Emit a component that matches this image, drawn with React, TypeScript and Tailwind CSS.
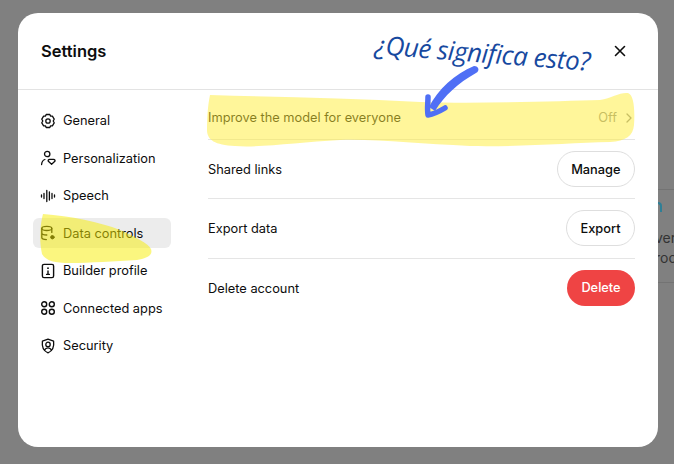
const iconClass = 'w-[16px] h-[16px] shrink-0';

const GeneralIcon = () => (
  <svg viewBox="0 0 16 16" fill="none" stroke="currentColor" strokeWidth="1.3" strokeLinejoin="round" className={iconClass}>
    <path d="M6.2 1.5h3.6l.8 1.6 1.8.1 1.8 3-1 1.8 1 1.8-1.8 3-1.8.1-.8 1.6H6.2l-.8-1.6-1.8-.1-1.8-3 1-1.8-1-1.8 1.8-3 1.8-.1z" />
    <circle cx="8" cy="8" r="2.2" />
  </svg>
);

const PersonalizationIcon = () => (
  <svg viewBox="0 0 16 16" fill="none" stroke="currentColor" strokeWidth="1.3" strokeLinecap="round" strokeLinejoin="round" className={iconClass}>
    <circle cx="7.2" cy="4" r="2.7" />
    <path d="M1.6 14.5c.2-2.4 1.3-4.3 3.3-5" />
    <path d="M11.6 14.2 8.6 11.6c-.9-.9-.2-2.3 1-2.3h4c1.2 0 1.9 1.4 1 2.3z" />
  </svg>
);

const SpeechIcon = () => (
  <svg viewBox="0 0 16 16" fill="none" stroke="currentColor" strokeWidth="1.3" strokeLinecap="round" className={iconClass}>
    <path d="M1.500 7v2M4 5.500v5M6.800 2.500v11M9.400 4v8M12 5.500v5M14.500 7v2" />
  </svg>
);

const DataIcon = () => (
  <svg viewBox="0 0 16 16" fill="none" stroke="currentColor" strokeWidth="1.3" strokeLinecap="round" className={iconClass}>
    <ellipse cx="6.8" cy="3.4" rx="5" ry="2.1" />
    <path d="M1.8 3.4v9.2c0 1.2 2 2 4.6 2M11.8 3.4v4M1.8 8c0 1.2 2.2 2 5 2" />
    <circle cx="12.4" cy="12.2" r="1.7" fill="currentColor" strokeWidth="1" />
  </svg>
);

const BuilderIcon = () => (
  <svg viewBox="0 0 16 16" fill="none" stroke="currentColor" strokeWidth="1.4" strokeLinecap="round" className={iconClass}>
    <rect x="2.4" y="1.4" width="11.2" height="13.2" rx="1.6" />
    <circle cx="8" cy="5.2" r="0.9" fill="currentColor" stroke="none" />
    <path d="M8 8v3.4M6.6 11.4h2.8" />
  </svg>
);

const AppsIcon = () => (
  <svg viewBox="0 0 16 16" fill="none" stroke="currentColor" strokeWidth="1.4" className={iconClass}>
    <circle cx="4.2" cy="4.2" r="2.5" />
    <circle cx="11.8" cy="4.2" r="2.5" />
    <circle cx="4.2" cy="11.8" r="2.5" />
    <circle cx="11.8" cy="11.8" r="2.5" />
  </svg>
);

const SecurityIcon = () => (
  <svg viewBox="0 0 16 16" fill="none" stroke="currentColor" strokeWidth="1.3" strokeLinecap="round" strokeLinejoin="round" className={iconClass}>
    <path d="M8 1.2 13.600 3.200c.6 4.800.2 9.400-5.600 11.600C2.200 12.600 1.800 8 2.400 3.200z" />
    <circle cx="8" cy="6.400" r="2.200" />
    <path d="M4.600 12c.7-1.500 1.900-2.200 3.400-2.200s2.700.7 3.400 2.200" />
  </svg>
);

const navItems = [
  { label: 'General', icon: <GeneralIcon /> },
  { label: 'Personalization', icon: <PersonalizationIcon /> },
  { label: 'Speech', icon: <SpeechIcon /> },
  { label: 'Data controls', icon: <DataIcon />, active: true },
  { label: 'Builder profile', icon: <BuilderIcon /> },
  { label: 'Connected apps', icon: <AppsIcon /> },
  { label: 'Security', icon: <SecurityIcon /> },
];

const rows = [
  { label: 'Shared links', action: 'Manage' },
  { label: 'Export data', action: 'Export' },
  { label: 'Delete account', action: 'Delete', danger: true },
];

const Annotations = () => (
  <>
    <svg viewBox="0 0 674 464" className="absolute inset-0 w-[674px] h-[464px] pointer-events-none">
      <path
        fill="#ffed35"
        fillOpacity="0.5"
        d="M210 95C280 97 350 98 420 102C480 104 560 101 600 100C612 98 620 92 628 93C634 95 635 110 634 125C633 136 626 141 610 142C570 143 520 147 470 146C420 144 380 139 340 140C300 142 260 148 235 146C215 145 207 140 207 130C207 115 208 105 210 95Z"
      />
      <path
        fill="#f7ed00"
        fillOpacity="0.5"
        d="M43 214C70 216 100 222 120 230C135 237 148 243 151 249C153 255 148 258 137 260C115 261 90 263 70 263C55 263 46 261 42 254C39 240 40 225 43 214Z"
      />
    </svg>
    <svg viewBox="0 0 674 464" fill="none" className="absolute inset-0 w-[674px] h-[464px] pointer-events-none">
      <path fill="#4f6ff5" d="M474 66C479 66 480 71 476 73C458 83 444 96 435 111L429 107C438 89 455 74 474 66Z" />
      <path stroke="#4f6ff5" strokeWidth="5.500" strokeLinecap="round" strokeLinejoin="round" d="M428 97C428 103 427 109 428 115C434 114 440 111 445 108" />
    </svg>
    <span className="absolute left-[375px] top-[26px] origin-left rotate-[4.5deg] whitespace-nowrap font-['Open_Sans',sans-serif] italic font-medium text-[26px] leading-[36px] tracking-[-0.4px] text-[#17499f]">
      ¿Qué significa esto?
    </span>
  </>
);

export default function App() {
  return (
    <div className="relative w-[674px] h-[464px] overflow-hidden bg-[#808080] pt-[13px] pl-[18px] flex font-['Inter',sans-serif] text-[#0d0d0d]">
      <div className="w-[640px] h-[434px] shrink-0 rounded-[20px] bg-white flex flex-col">
        <header className="h-[77px] shrink-0 border-b border-[#e3e3e3] flex items-center justify-between pl-[23px] pr-[32px]">
          <h1 className="text-[16.500px] font-semibold">Settings</h1>
          <svg viewBox="0 0 12 12" fill="none" stroke="#0d0d0d" strokeWidth="1.6" strokeLinecap="round" className="w-[12px] h-[12px]">
            <path d="M1.500 1.500l9 9M10.500 1.500l-9 9" />
          </svg>
        </header>
        <div className="flex flex-1">
          <nav className="w-[190px] shrink-0 pl-[15px] pr-[37px] pt-[15px] flex flex-col gap-[7.6px] text-[12.800px]">
            {navItems.map((item) => (
              <div
                key={item.label}
                className={
                  item.active
                    ? 'h-[30px] rounded-[6px] bg-[#ececec] flex items-center gap-[7px] pl-[7px] pt-[1px]'
                    : 'h-[30px] rounded-[6px] flex items-center gap-[7px] pl-[7px] pt-[1px]'
                }>
                {item.icon}
                <span>{item.label}</span>
              </div>
            ))}
          </nav>
          <div className="flex-1 pr-[23px] pt-[7px] text-[12.800px]">
            <div className="h-[43px] border-b border-[#e5e5e5] flex items-center justify-between">
              <span>Improve the model for everyone</span>
              <div className="flex items-center gap-[9px] text-[#8f8f8f] pr-[3px]">
                <span>Off</span>
                <svg viewBox="0 0 6 10" fill="none" stroke="#8f8f8f" strokeWidth="1.300" strokeLinecap="round" strokeLinejoin="round" className="w-[6px] h-[10px]">
                  <path d="M1 1l4 4-4 4" />
                </svg>
              </div>
            </div>
            {rows.map((row) => (
              <div key={row.label} className="h-[59.300px] border-b border-[#e5e5e5] last:border-b-0 flex items-center justify-between">
                <span>{row.label}</span>
                <button
                  className={
                    row.danger
                      ? 'h-[36px] w-[68px] rounded-full bg-[#ef4444] text-white font-medium -mt-[1px]'
                      : 'h-[36px] px-[13.500px] rounded-full border border-[#dedede] bg-white font-medium'
                  }>
                  {row.action}
                </button>
              </div>
            ))}
          </div>
        </div>
      </div>
      <div className="w-[16px] shrink-0 mt-[176px] h-[94px] border-y border-[#737373] overflow-hidden text-[14px] leading-[20px] text-[#333333] whitespace-nowrap">
        <div className="h-[10px] mt-[12px] w-[4px] rounded-tr-full border-t-2 border-r-2 border-[#2f7f96]"></div>
        <div className="mt-[16px] -ml-[3px]">ver</div>
        <div className="-ml-[3px]">roc</div>
      </div>
      <Annotations />
    </div>
  );
}
